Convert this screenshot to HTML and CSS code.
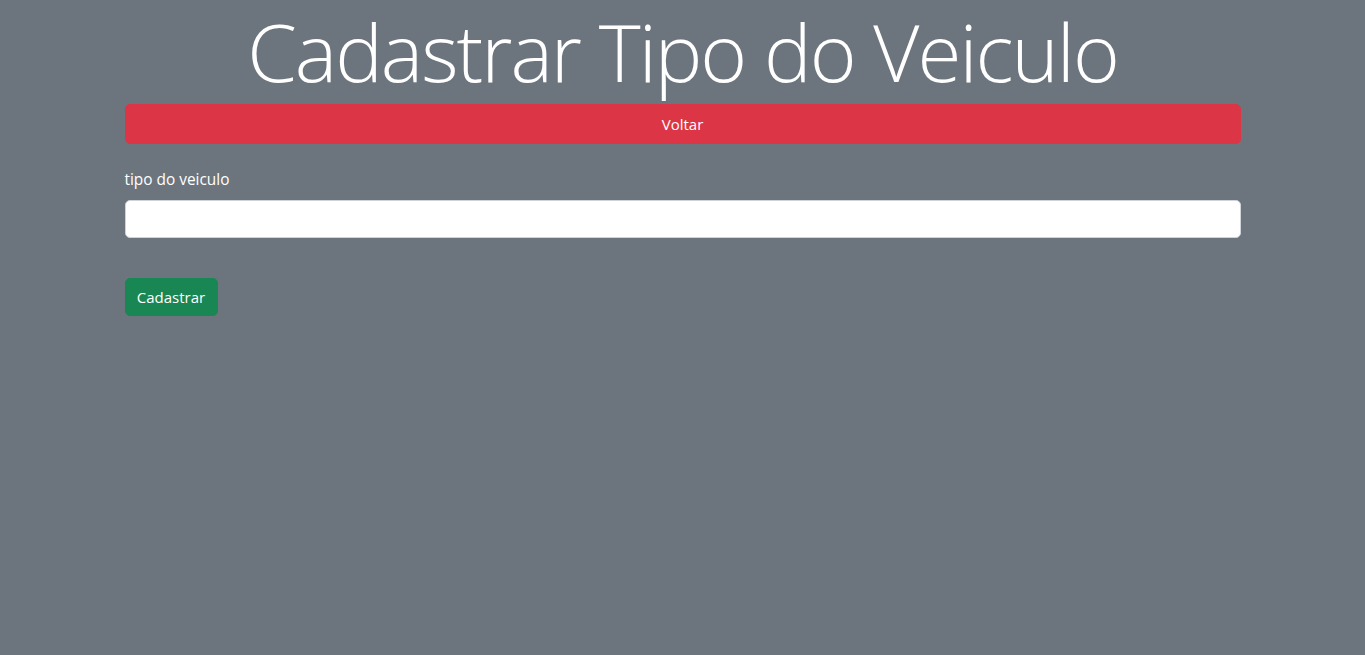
FILE: index.html
```html
<!DOCTYPE html>
<html lang="pt">
<head>
<meta charset="utf-8">
<title>Cadastrar Tipo do Veiculo</title>
<link rel="stylesheet" href="styles.css">
</head>
<body>
<div class="container">
  <h1 class="title">Cadastrar Tipo do Veiculo</h1>
  <a class="btn btn-danger" href="#">Voltar</a>
  <form class="form">
    <label class="form-label" for="tipo">tipo do veiculo</label>
    <input class="form-control" id="tipo" type="text">
    <button class="btn btn-success" type="button">Cadastrar</button>
  </form>
</div>
</body>
</html>
```
FILE: styles.css
```css
* { box-sizing: border-box; }
html, body {
  margin: 0;
  height: 100%;
}
body {
  background: #6c757d;
  color: #fff;
  font-family: "Open Sans", "Noto Sans", sans-serif;
  font-size: 15px;
  line-height: 1.5;
}
.container {
  width: 1140px;
  margin: 0 auto;
  padding: 0 12px;
}
.title {
  margin: 0 0 5px;
  padding-top: 3px;
  font-size: 80px;
  font-weight: 300;
  line-height: 96px;
  text-align: center;
  letter-spacing: -2px;
}
.btn {
  display: inline-flex;
  align-items: center;
  justify-content: center;
  border: 1px solid transparent;
  border-radius: 5px;
  color: #fff;
  text-decoration: none;
  font-family: inherit;
  font-size: 15px;
  padding: 0 12px;
  height: 38px;
  cursor: pointer;
}
.btn-danger {
  display: flex;
  width: 100%;
  height: 40px;
  background: #dc3545;
  border-color: #dc3545;
}
.btn-success {
  background: #198754;
  border-color: #198754;
  width: 93px;
  padding: 0;
}
.form {
  display: flex;
  flex-direction: column;
  align-items: flex-start;
  padding-top: 24px;
}
.form-label {
  display: block;
  font-size: 15.4px;
  line-height: 24px;
  margin-bottom: 8px;
}
.form-control {
  width: 100%;
  height: 38px;
  border: 1px solid #ced4da;
  border-radius: 5px;
  background: #fff;
  font-size: 16px;
  padding: 6px 12px;
  margin-bottom: 40px;
}
```
